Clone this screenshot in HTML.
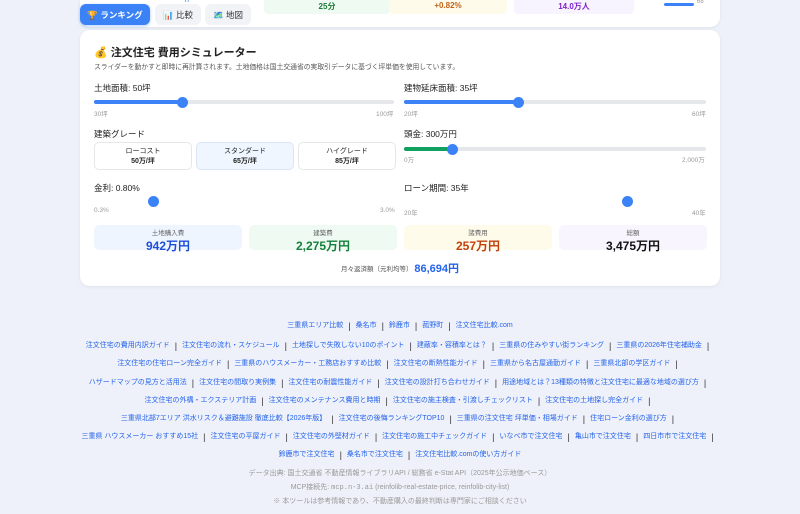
<!DOCTYPE html><html><head><meta charset="utf-8"><style>
*{box-sizing:border-box;margin:0;padding:0}
body{width:800px;height:514px;overflow:hidden;background:#eef1f9;font-family:"Liberation Sans","Noto Sans CJK JP",sans-serif;color:#222;position:relative}
.top{position:absolute;left:80px;top:-10px;width:640px;height:37px;background:#fff;border-radius:10px;box-shadow:0 1px 3px rgba(0,0,0,.06)}
.stat{position:absolute;top:-10px;height:24px;border-radius:4px;font-size:8px;font-weight:bold;text-align:center;padding-top:11px}
.tab{position:absolute;top:4px;height:21px;border-radius:6px;font-size:8.5px;display:flex;align-items:center;justify-content:center;gap:3px}
.card{position:absolute;left:80px;top:30px;width:640px;height:256px;background:#fff;border-radius:10px;box-shadow:0 1px 4px rgba(0,0,0,.06)}
.a{position:absolute;font-size:8.5px;color:#222}
.s{position:absolute;font-size:6.5px;color:#999}
.tr{position:absolute;height:4px;background:#e5e7eb;border-radius:2px}
.fill{position:absolute;left:0;top:0;height:4px;border-radius:2px;background:#3b82f6}
.th{position:absolute;width:11px;height:11px;border-radius:50%;background:#3b82f6;top:-3.5px}
.gb{position:absolute;top:112px;width:98px;height:28px;border:1px solid #e5e7eb;border-radius:5px;font-size:7px;text-align:center;padding-top:4px;line-height:10px}
.res{position:absolute;top:195px;width:148px;height:25px;border-radius:5px;text-align:center;font-size:6.5px;color:#666;padding-top:2px}
.res b{display:block;font-size:12px;margin-top:0}
.links{position:absolute;left:0;width:800px;font-size:7px;color:#2563eb;text-align:center;white-space:nowrap}
.links span.p{color:#333;margin:0 5px;font-size:9px;vertical-align:-2px}
.f{position:absolute;left:0;width:800px;text-align:center;font-size:7px;color:#999}
</style></head><body>
<div class="top">
<div class="stat" style="left:184px;width:126px;top:0;background:#effbf2;color:#1d7a3a">25分</div>
<div class="stat" style="left:309px;width:118px;top:0;background:#fffbea;color:#c2621a">+0.82%</div>
<div class="stat" style="left:434px;width:120px;top:0;background:#f8f4ff;color:#7e22ce">14.0万人</div>
<div style="position:absolute;left:584px;top:13px;width:30px;height:3px;background:#3b82f6;border-radius:2px"></div>
<div style="position:absolute;left:617px;top:9px;font-size:6px;color:#999">68</div>
<div style="position:absolute;left:105px;top:5px;font-size:8px;color:#3b82f6">/r</div>
</div>
<div class="tab" style="left:80px;width:70px;background:#3b82f6;color:#fff;font-weight:bold;box-shadow:0 1px 3px rgba(59,130,246,.4)">🏆 ランキング</div>
<div class="tab" style="left:155px;width:46px;background:#f1f3f7;color:#333">📊 比較</div>
<div class="tab" style="left:205px;width:46px;background:#f1f3f7;color:#333">🗺️ 地図</div>
<div class="card">
<div class="a" style="left:14px;top:14px;font-size:11px;font-weight:bold">💰 注文住宅 費用シミュレーター</div>
<div class="a" style="left:14px;top:31px;font-size:6.8px;color:#555">スライダーを動かすと即時に再計算されます。土地価格は国土交通省の実取引データに基づく坪単価を使用しています。</div>
<div class="a" style="left:14px;top:52px">土地面積: 50坪</div>
<div class="tr" style="left:14px;top:70px;width:300px"><div class="fill" style="width:88px"></div><div class="th" style="left:83px"></div></div>
<div class="s" style="left:14px;top:78px">30坪</div><div class="s" style="left:296px;top:78px">100坪</div>
<div class="a" style="left:324px;top:52px">建物延床面積: 35坪</div>
<div class="tr" style="left:324px;top:70px;width:302px"><div class="fill" style="width:114px"></div><div class="th" style="left:109px"></div></div>
<div class="s" style="left:324px;top:78px">20坪</div><div class="s" style="left:612px;top:78px">60坪</div>
<div class="a" style="left:14px;top:98px">建築グレード</div>
<div class="gb" style="left:14px">ローコスト<br><b>50万/坪</b></div>
<div class="gb" style="left:116px;background:#eff6ff;border-color:#dbe5f5">スタンダード<br><b>65万/坪</b></div>
<div class="gb" style="left:218px">ハイグレード<br><b>85万/坪</b></div>
<div class="a" style="left:324px;top:98px">頭金: 300万円</div>
<div class="tr" style="left:324px;top:117px;width:302px"><div class="fill" style="width:48px;background:#10a060"></div><div class="th" style="left:43px"></div></div>
<div class="s" style="left:324px;top:124px">0万</div><div class="s" style="left:602px;top:124px">2,000万</div>
<div class="a" style="left:14px;top:152px">金利: 0.80%</div>
<div class="th" style="left:68px;top:166px"></div>
<div class="s" style="left:14px;top:177px">0.3%</div><div class="s" style="left:300px;top:177px">3.0%</div>
<div class="a" style="left:324px;top:152px">ローン期間: 35年</div>
<div class="th" style="left:542px;top:166px"></div>
<div class="s" style="left:324px;top:177px">20年</div><div class="s" style="left:612px;top:177px">40年</div>
<div class="res" style="left:14px;background:#eff5ff">土地購入費<b style="color:#1d4ed8">942万円</b></div>
<div class="res" style="left:169px;background:#effbf2">建築費<b style="color:#15803d">2,275万円</b></div>
<div class="res" style="left:324px;background:#fffbea">諸費用<b style="color:#c2410c">257万円</b></div>
<div class="res" style="left:479px;background:#f8f5ff">総額<b style="color:#111">3,475万円</b></div>
<div class="a" style="left:0;width:640px;text-align:center;top:230px;font-size:6.5px;color:#555">月々返済額（元利均等） <b style="font-size:11px;color:#2563eb;vertical-align:-1px">86,694円</b></div>
</div>
<div class="links" style="top:320px">三重県エリア比較<span class="p">|</span>桑名市<span class="p">|</span>鈴鹿市<span class="p">|</span>菰野町<span class="p">|</span>注文住宅比較.com</div>
<div class="links" style="top:340px">注文住宅の費用内訳ガイド<span class="p">|</span>注文住宅の流れ・スケジュール<span class="p">|</span>土地探しで失敗しない10のポイント<span class="p">|</span>建蔽率・容積率とは？<span class="p">|</span>三重県の住みやすい街ランキング<span class="p">|</span>三重県の2026年住宅補助金<span class="p">|</span></div>
<div class="links" style="top:358px">注文住宅の住宅ローン完全ガイド<span class="p">|</span>三重県のハウスメーカー・工務店おすすめ比較<span class="p">|</span>注文住宅の断熱性能ガイド<span class="p">|</span>三重県から名古屋通勤ガイド<span class="p">|</span>三重県北部の学区ガイド<span class="p">|</span></div>
<div class="links" style="top:377px">ハザードマップの見方と活用法<span class="p">|</span>注文住宅の間取り実例集<span class="p">|</span>注文住宅の耐震性能ガイド<span class="p">|</span>注文住宅の設計打ち合わせガイド<span class="p">|</span>用途地域とは？13種類の特徴と注文住宅に最適な地域の選び方<span class="p">|</span></div>
<div class="links" style="top:395px">注文住宅の外構・エクステリア計画<span class="p">|</span>注文住宅のメンテナンス費用と時期<span class="p">|</span>注文住宅の施主検査・引渡しチェックリスト<span class="p">|</span>注文住宅の土地探し完全ガイド<span class="p">|</span></div>
<div class="links" style="top:413px">三重県北部7エリア 洪水リスク＆避難施設 徹底比較【2026年版】<span class="p">|</span>注文住宅の後悔ランキングTOP10<span class="p">|</span>三重県の注文住宅 坪単価・相場ガイド<span class="p">|</span>住宅ローン金利の選び方<span class="p">|</span></div>
<div class="links" style="top:431px">三重県 ハウスメーカー おすすめ15社<span class="p">|</span>注文住宅の平屋ガイド<span class="p">|</span>注文住宅の外壁材ガイド<span class="p">|</span>注文住宅の施工中チェックガイド<span class="p">|</span>いなべ市で注文住宅<span class="p">|</span>亀山市で注文住宅<span class="p">|</span>四日市市で注文住宅<span class="p">|</span></div>
<div class="links" style="top:449px">鈴鹿市で注文住宅<span class="p">|</span>桑名市で注文住宅<span class="p">|</span>注文住宅比較.comの使い方ガイド</div>
<div class="f" style="top:468px">データ出典: 国土交通省 不動産情報ライブラリAPI / 総務省 e-Stat API（2025年公示地価ベース）</div>
<div class="f" style="top:482px">MCP接続先: <span style="font-family:'Liberation Mono',monospace">mcp.n-3.ai</span> (reinfolib-real-estate-price, reinfolib-city-list)</div>
<div class="f" style="top:496px">※ 本ツールは参考情報であり、不動産購入の最終判断は専門家にご相談ください</div>
</body></html>
